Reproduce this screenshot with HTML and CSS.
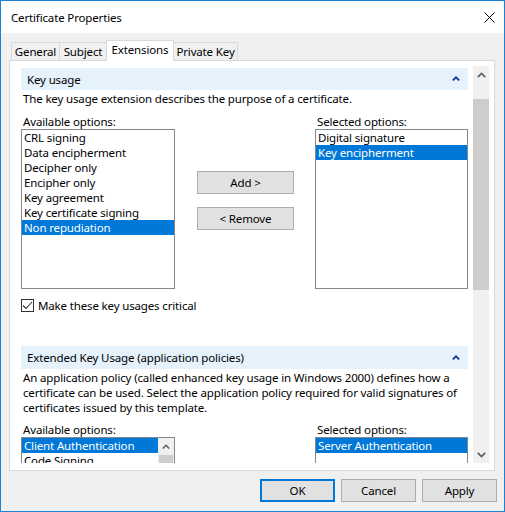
FILE: index.html
```html
<!DOCTYPE html>
<html lang="en">
  <head>
    <meta charset="UTF-8" />
    <meta name="viewport" content="width=device-width, initial-scale=1.0" />
    <title>Certificate Properties</title>
    <link rel="stylesheet" href="styles.css">
  </head>
  <body>
    <div class="window">
      <div class="titlebar">
        <span class="title">Certificate Properties</span>
        <svg class="close" width="11" height="11" viewBox="0 0 11 11">
          <path d="M0.5 0.5 L10.5 10.5 M10.5 0.5 L0.5 10.5" stroke="#000" stroke-width="1" fill="none" />
        </svg>
      </div>
      <div class="body">
        <div class="tabs">
          <div class="tab tab-general">General</div>
          <div class="tab tab-subject">Subject</div>
          <div class="tab tab-ext active">Extensions</div>
          <div class="tab tab-key">Private Key</div>
        </div>
        <div class="panel">
          <div class="viewport">
            <div class="content">
              <div class="band">
                <span>Key usage</span>
                <svg class="caret" width="8" height="5" viewBox="0 0 8 5">
                  <path d="M0.8 4.5 L4 1.3 L7.2 4.5" stroke="#1c3c94" stroke-width="1.8" fill="none" />
                </svg>
              </div>
              <p class="desc">The key usage extension describes the purpose of a certificate.</p>
              <div class="picker">
                <div class="col col-left">
                  <div class="label">Available options:</div>
                  <div class="listbox tall">
                    <div class="item">CRL signing</div>
                    <div class="item">Data encipherment</div>
                    <div class="item">Decipher only</div>
                    <div class="item">Encipher only</div>
                    <div class="item">Key agreement</div>
                    <div class="item">Key certificate signing</div>
                    <div class="item selected">Non repudiation</div>
                  </div>
                </div>
                <div class="mid">
                  <button class="btn">Add &gt;</button>
                  <button class="btn">&lt; Remove</button>
                </div>
                <div class="col col-right">
                  <div class="label">Selected options:</div>
                  <div class="listbox tall">
                    <div class="item">Digital signature</div>
                    <div class="item selected">Key encipherment</div>
                  </div>
                </div>
              </div>
              <label class="check">
                <span class="box">
                  <svg width="11" height="11" viewBox="0 0 11 11">
                    <path d="M1 5.5 L4 8.5 L10 2" stroke="#333" stroke-width="1.1" fill="none" />
                  </svg>
                </span>
                <span>Make these key usages critical</span>
              </label>
              <div class="band band-second">
                <span>Extended Key Usage (application policies)</span>
                <svg class="caret" width="8" height="5" viewBox="0 0 8 5">
                  <path d="M0.8 4.5 L4 1.3 L7.2 4.5" stroke="#1c3c94" stroke-width="1.8" fill="none" />
                </svg>
              </div>
              <p class="desc">An application policy (called enhanced key usage in Windows 2000) defines how a certificate can be used. Select the application policy required for valid signatures of certificates issued by this template.</p>
              <div class="picker">
                <div class="col col-left">
                  <div class="label">Available options:</div>
                  <div class="listbox short">
                    <div class="items">
                      <div class="item selected">Client Authentication</div>
                      <div class="item">Code Signing</div>
                    </div>
                    <div class="minibar">
                      <div class="minibar-up">
                        <svg width="8" height="5" viewBox="0 0 8 5">
                          <path d="M0.8 4.5 L4 1.3 L7.2 4.5" stroke="#606060" stroke-width="1.6" fill="none" />
                        </svg>
                      </div>
                      <div class="minibar-thumb"></div>
                    </div>
                  </div>
                </div>
                <div class="mid"></div>
                <div class="col col-right">
                  <div class="label">Selected options:</div>
                  <div class="listbox short">
                    <div class="items">
                      <div class="item selected">Server Authentication</div>
                    </div>
                  </div>
                </div>
              </div>
            </div>
            <div class="vscroll">
              <div class="arrow">
                <svg width="9" height="6" viewBox="0 0 9 6">
                  <path d="M0.8 5.2 L4.5 1.5 L8.2 5.2" stroke="#606060" stroke-width="1.7" fill="none" />
                </svg>
              </div>
              <div class="track">
                <div class="thumb"></div>
              </div>
              <div class="arrow">
                <svg width="9" height="6" viewBox="0 0 9 6">
                  <path d="M0.8 0.8 L4.5 4.5 L8.2 0.8" stroke="#606060" stroke-width="1.7" fill="none" />
                </svg>
              </div>
            </div>
          </div>
        </div>
        <div class="buttons">
          <button class="btn dlg default">OK</button>
          <button class="btn dlg">Cancel</button>
          <button class="btn dlg">Apply</button>
        </div>
      </div>
    </div>
  </body>
</html>
```

FILE: styles.css
```css
* {
  box-sizing: border-box;
}
body {
  margin: 0;
  font-family: "Noto Sans", "Open Sans", sans-serif;
  font-size: 11.5px;
  letter-spacing: -0.15px;
  color: #000;
}
.window {
  width: 505px;
  height: 512px;
  border: 1px solid #1883d7;
  background-color: #f0f0f0;
  display: flex;
  flex-direction: column;
}
.titlebar {
  height: 32px;
  background: white;
  display: flex;
  align-items: center;
  padding: 0 10px 0 10px;
  justify-content: space-between;
}
.title {
  line-height: 15px;
  margin-top: 1px;
}
.close {
  margin-right: -1px;
  margin-top: 1px;
}
.body {
  padding: 7px 0 0 8px;
  flex: 1;
}
.tabs {
  display: flex;
  align-items: flex-end;
  height: 21px;
  margin: 0 0 -1px 2px;
}
.tab {
  height: 19px;
  border: 1px solid #d9d9d9;
  border-bottom: none;
  text-align: center;
  line-height: 17px;
  margin-left: -1px;
}
.tab:first-child {
  margin-left: 0;
}
.tab-general { width: 49px; }
.tab-subject { width: 48px; }
.tab-ext { width: 68px; }
.tab-key { width: 65px; }
.tab.active {
  height: 21px;
  line-height: 17px;
  background: white;
  position: relative;
  z-index: 1;
}
.panel {
  width: 486px;
  height: 411px;
  border: 1px solid #d9d9d9;
  background: white;
  padding: 5px 5px 6px 11px;
  display: flex;
}
.viewport {
  flex: 1;
  display: flex;
  gap: 5px;
}
.content {
  width: 447px;
  height: 397px;
  overflow: hidden;
  padding-top: 2px;
}
.band {
  height: 22px;
  background-color: #e5f1fb;
  display: flex;
  align-items: center;
  justify-content: space-between;
  padding: 0 8px 0 6px;
}
.band span {
  line-height: 15px;
}
.caret {
  margin-top: -1px;
}
.desc {
  margin: 1px 0 0 0;
  padding-left: 2px;
  line-height: 15px;
}
.picker {
  display: flex;
  margin-top: 8px;
}
.band-second + .desc + .picker {
  margin-top: 7px;
}
.label {
  line-height: 15px;
  padding-left: 2px;
}
.col-left {
  width: 154px;
}
.col-right {
  width: 153px;
  margin-left: 21px;
}
.mid {
  width: 97px;
  margin-left: 22px;
  padding-top: 57px;
  display: flex;
  flex-direction: column;
  gap: 13px;
}
.listbox {
  border: 1px solid #828790;
  background: white;
}
.listbox.tall {
  height: 160px;
}
.listbox.short {
  height: 60px;
  display: flex;
}
.items {
  flex: 1;
  overflow: hidden;
}
.item {
  height: 15px;
  line-height: 15px;
  padding-left: 2px;
  white-space: nowrap;
  overflow: hidden;
}
.item.selected {
  background-color: #0078d7;
  color: white;
}
.minibar {
  width: 16px;
  background: #f0f0f0;
}
.minibar-up {
  height: 17px;
  display: flex;
  justify-content: center;
  align-items: center;
}
.minibar-thumb {
  height: 30px;
  margin: 0 1px;
  background: #cdcdcd;
}
.btn {
  font-family: inherit;
  font-size: 11.5px;
  letter-spacing: -0.15px;
  color: #000;
  background-color: #e1e1e1;
  border: 1px solid #adadad;
  padding: 0;
  height: 23px;
  line-height: 15px;
}
.mid .btn {
  width: 97px;
}
.check {
  display: flex;
  align-items: center;
  gap: 4px;
  margin-top: 10px;
  height: 13px;
}
.box {
  width: 13px;
  height: 13px;
  border: 1px solid #333;
  display: flex;
  align-items: center;
  justify-content: center;
}
.band-second {
  margin-top: 34px;
  height: 23px;
}
.vscroll {
  width: 16px;
  height: 397px;
  background: #f0f0f0;
  display: flex;
  flex-direction: column;
}
.arrow {
  height: 17px;
  display: flex;
  justify-content: center;
  align-items: center;
}
.track {
  flex: 1;
  padding-top: 16px;
}
.thumb {
  height: 191px;
  background: #cdcdcd;
}
.buttons {
  display: flex;
  gap: 6px;
  margin: 8px 0 0 251px;
}
.btn.dlg {
  width: 75px;
}
.btn.default {
  border: 2px solid #0078d7;
}
```
